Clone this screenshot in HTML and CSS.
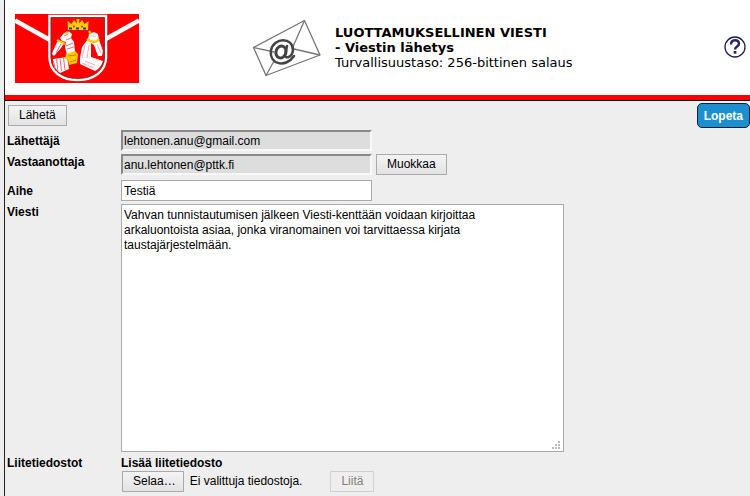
FILE: index.html
```html
<!DOCTYPE html>
<html lang="fi">
<head>
<meta charset="utf-8">
<title>Luottamuksellinen viesti</title>
<link rel="stylesheet" href="styles.css">
</head>
<body>
<div class="frame">
  <header class="header">
    <svg class="crest" viewBox="0 0 124 69" aria-hidden="true">
      <rect width="124" height="69" fill="#f00"/>
      <path d="M0 6.500L35 26M124 6.500L89 26" stroke="#fff" stroke-width="4.500"/>
      <path d="M34.500 2H91V43C91 57 79 66 62.500 66S34.500 57 34.500 43Z" fill="#f00" stroke="#fff" stroke-width="2.500"/>
      <path d="M36 3.500H89.500V43C89.500 56 78 64.500 62.500 64.500S36 56 36 43Z" fill="none" stroke="#5b3a3a" stroke-width=".8"/>
      <path d="M53 16L52.500 7 56.500 10 59 6 62 9.500 61.500 5H64.500L64 9.500 67 6 69.500 10 73.500 7 73 16Z" fill="#fc0"/>
      <path d="M54 14.500H73" stroke="#1638c8" stroke-width="2" stroke-dasharray="3 4"/>
      <path d="M58 12.500H60M66 12.500H68" stroke="#e22" stroke-width="1.500"/>
      <path d="M43 26L49 29 46 34 39 42 37 40 38 37Z" fill="#fff"/>
      <path d="M45 24L49 19 54 17.500 57 20 56 24 59 28 60 38 52 41 50 33 51 28 47 27Z" fill="#fff"/>
      <path d="M38 45L52 43 54 55 45 59C41 56 38 52 38 45Z" fill="#fff"/>
      <path d="M40 55L38.500 47M43 57L41.500 45M46.500 57L45 44.500M50 56L48.500 44M41 39L46 30M51 26L56 24M51 32L58 29M52 35L59 33M49 22L53 20" stroke="#f67" stroke-width="1"/>
      <path d="M51 40L60 37 63 40 62 49 54 51 53 46 50 45Z" fill="#fc0"/>
      <path d="M53 42L61 41M55 48L61 46" stroke="#b60" stroke-width=".8"/>
      <path d="M42 26L50 30M51 18L53 20" stroke="#fc0" stroke-width="2.500"/>
      <path d="M74 20L79 18 83 20 84 26 88 37 87 42 83 42 79 31 76 29 76 43 88 47C87 51 84 55 80 57L65 50 65 44 67 33 73 25Z" fill="#fff"/>
      <path d="M70 31L67 44M74 31L72 44M70 47L80 51M67 49L79 54M76 22L81 22M82 30L86 39" stroke="#fab" stroke-width="1"/>
      <path d="M72 25C77 29 81 29 84 25M74 17L76 20" fill="none" stroke="#fc0" stroke-width="2.300"/>
    </svg>
    <div class="brand">
      <svg class="mail" viewBox="0 0 70 60" aria-hidden="true">
        <g fill="none" stroke="#777" stroke-width="1.300" stroke-linejoin="round">
          <path d="M1.500 28.500L52.500 1.500 68 36 14 56.500Z"/>
          <path d="M1.500 28.500L22 33M40 30L52.500 1.500M14 56.500L22 42M42 30L68 36"/>
        </g>
        <g fill="none" stroke="#444" stroke-linecap="round">
          <ellipse cx="29" cy="33" rx="5" ry="6" stroke-width="3" transform="rotate(20 29 33)"/>
          <path d="M35 27L33 36C33 40 40 39 41 31C41 18 22 18 19 31C17 46 34 49 42 37" stroke-width="2.500"/>
        </g>
      </svg>
      <div class="headings">
        <h1 class="title">LUOTTAMUKSELLINEN VIESTI</h1>
        <h2 class="title">- Viestin lähetys</h2>
        <p class="level">Turvallisuustaso: 256-bittinen salaus</p>
      </div>
    </div>
    <a class="help" href="#" aria-label="Ohje">
      <svg viewBox="0 0 22 22" aria-hidden="true">
        <circle cx="11" cy="11" r="10" fill="#fff" stroke="#1d1d55" stroke-width="1.300"/>
        <path d="M7 8.500C7 3 15 3.200 15 7.600C15 10.500 11 10.500 11 13.500" fill="none" stroke="#25256e" stroke-width="2.500"/>
        <rect x="9.700" y="15" width="2.700" height="2.700" fill="#25256e"/>
      </svg>
    </a>
  </header>
  <form class="form">
    <div class="toolbar">
      <button class="button" type="button">Lähetä</button>
      <button class="quit" type="button">Lopeta</button>
    </div>
    <div class="fields">
      <label class="label middle" for="sender">Lähettäjä</label>
      <div class="row"><input class="input readonly" id="sender" type="text" value="lehtonen.anu@gmail.com" readonly></div>
      <label class="label" for="recipient">Vastaanottaja</label>
      <div class="row recipient"><input class="input readonly" id="recipient" type="text" value="anu.lehtonen@pttk.fi" readonly><button class="button" type="button">Muokkaa</button></div>
      <label class="label middle" for="subject">Aihe</label>
      <div class="row"><input class="input" id="subject" type="text" value="Testiä"></div>
      <label class="label" for="message">Viesti</label>
      <div class="message-box">
        <textarea class="message" id="message" rows="16">Vahvan tunnistautumisen jälkeen Viesti-kenttään voidaan kirjoittaa arkaluontoista asiaa, jonka viranomainen voi tarvittaessa kirjata taustajärjestelmään.</textarea>
        <svg class="grip" viewBox="0 0 8 8" aria-hidden="true"><path d="M6 0h2v2h-2zM3 3h2v2h-2zM6 3h2v2h-2zM0 6h2v2h-2zM3 6h2v2h-2zM6 6h2v2h-2z" fill="#bbb"/></svg>
      </div>
      <span class="label">Liitetiedostot</span>
      <div class="attachments">
        <span class="label">Lisää liitetiedosto</span>
        <div class="files">
          <label class="button browse" for="file">Selaa…</label>
          <input class="file" id="file" type="file">
          <span class="status">Ei valittuja tiedostoja.</span>
          <button class="button" type="button" disabled>Liitä</button>
        </div>
      </div>
    </div>
  </form>
</div>
</body>
</html>
```
FILE: styles.css
```css
* {
  box-sizing: border-box;
}

body {
  margin: 0;
  padding-left: 4px;
  background: #eee;
  color: #000;
  font: 12px/15px "Liberation Sans", Arial, sans-serif;
}

.frame {
  min-height: 100vh;
  border-left: 1px solid #222;
}

.header {
  display: flex;
  align-items: flex-start;
  padding: 14px 4px 12px 10px;
  border-bottom: 1px solid #000;
  background: #fff;
  box-shadow: inset 0 -5px #f00;
}

.crest {
  width: 124px;
  height: 74px;
  padding-bottom: 5px;
}

.brand {
  display: flex;
  gap: 13px;
  margin-left: 113px;
  padding-top: 5px;
}

.mail {
  width: 70px;
  height: 60px;
}

.headings {
  padding-top: 6px;
}

.title {
  margin: 0;
  font: bold 13px/15px "DejaVu Sans", Verdana, sans-serif;
}

.level {
  margin: 0;
  font: 13px/16px "DejaVu Sans", Verdana, sans-serif;
}

.help {
  display: block;
  width: 22px;
  height: 22px;
  margin-top: 22px;
  margin-left: auto;
}

.toolbar {
  display: flex;
  align-items: flex-start;
  justify-content: space-between;
  padding: 2px 0 0 3px;
}

.button {
  height: 21px;
  padding: 0 10px;
  border: 1px solid #aaa;
  background: linear-gradient(#f3f3f3, #e3e3e3);
  color: #000;
  font: 12px/19px "Liberation Sans", Arial, sans-serif;
}

.button:disabled {
  border-color: #d0d0d0;
  background: #eee;
  color: #808080;
}

.browse {
  padding-right: 7px;
}

.toolbar .button {
  margin-top: 2px;
}

.quit {
  height: 25px;
  padding: 0 6px;
  border: 1px solid #123;
  border-radius: 5px;
  background: #1c8fd1;
  color: #fff;
  font: bold 12px/22px "Liberation Sans", Arial, sans-serif;
}

.fields {
  display: grid;
  grid-template-columns: 114px minmax(0, 1fr);
  row-gap: 3px;
  padding: 2px 2px 0;
}

.label {
  padding-top: 1px;
  font-weight: bold;
}

.middle {
  align-self: center;
}

.row {
  display: flex;
  gap: 4px;
}

.recipient {
  padding-bottom: 2px;
}

.input {
  width: 251px;
  height: 21px;
  padding: 0 2px;
  border: 1px solid #aaa;
  background: #fff;
  color: #000;
  font: 12px/15px "Liberation Sans", Arial, sans-serif;
}

.readonly {
  border: 2px solid #f8f8f8;
  border-top-color: #888;
  border-left-color: #888;
  padding: 0 1px;
  background: #ddd;
}

.message-box {
  position: relative;
  width: 443px;
  max-width: 100%;
}

.message {
  display: block;
  width: 100%;
  height: 248px;
  margin: 0;
  padding: 3px 20px 3px 2px;
  border: 1px solid #aaa;
  background: #fff;
  color: #000;
  font: 12px/15px "Liberation Sans", Arial, sans-serif;
  resize: none;
}

.grip {
  position: absolute;
  right: 4px;
  bottom: 3px;
  width: 8px;
  height: 8px;
}

.attachments {
  display: flex;
  flex-direction: column;
}

.files {
  display: flex;
  align-items: center;
  padding-left: 1px;
}

.file {
  position: absolute;
  width: 1px;
  height: 1px;
  opacity: 0;
}

.status {
  margin: 0 28px 0 6px;
}
```
